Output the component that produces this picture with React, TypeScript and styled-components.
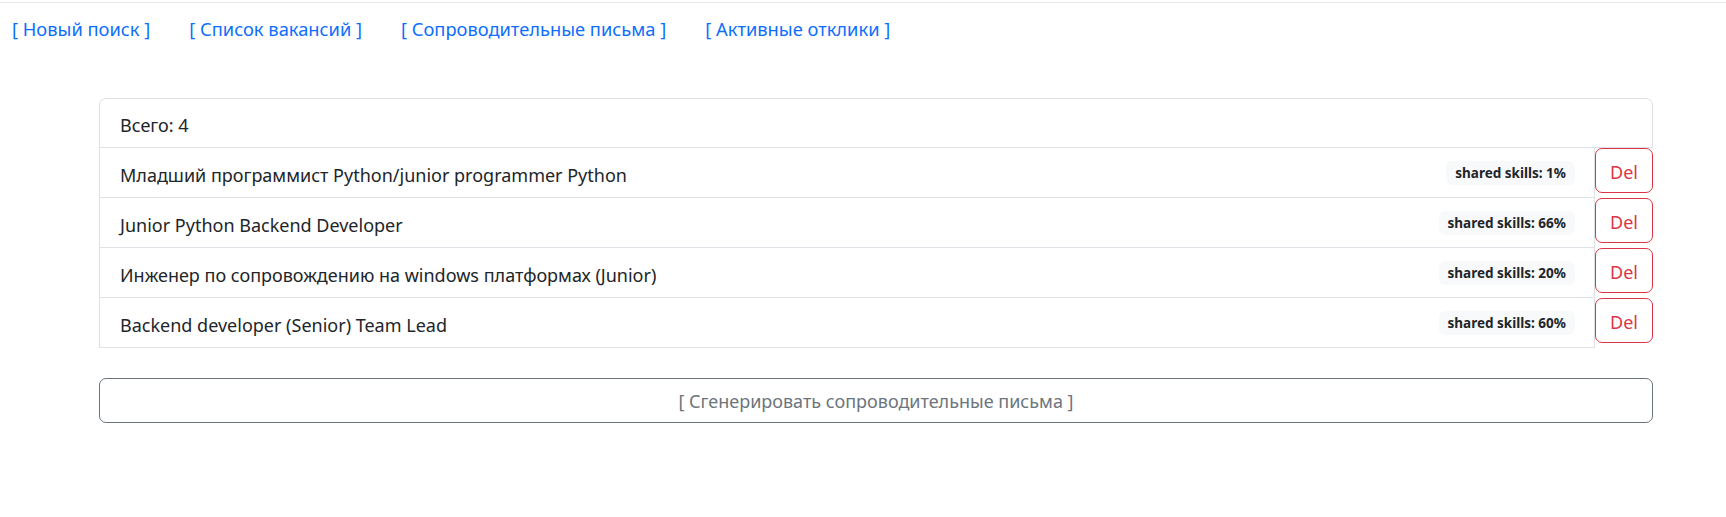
import React from "react";
import styled, { createGlobalStyle } from "styled-components";

const Global = createGlobalStyle`
  html, body { margin: 0; padding: 0; background: #fff; }
  body {
    font-family: "Noto Sans", "Open Sans", "Liberation Sans", sans-serif;
    font-size: 18px;
    color: #212529;
  }
`;

const TopRule = styled.div`
  height: 2px;
  border-bottom: 1px solid #e6e6e6;
`;

const Nav = styled.nav`
  display: flex;
  gap: 39px;
  padding: 11px 0 0 12px;
  height: 29px;
`;

const NavLink = styled.a`
  color: #0d6efd;
  text-decoration: none;
  font-size: 18.3px;
  line-height: 29px;
  white-space: nowrap;
  cursor: pointer;
`;

const Main = styled.main`
  margin: 55px 73px 0 99px;
  display: flex;
  flex-direction: column;
`;

const List = styled.div`
  display: flex;
  flex-direction: column;
`;

const Header = styled.div`
  height: 50px;
  box-sizing: border-box;
  border: 1px solid #dee2e6;
  border-radius: 7px 7px 0 0;
  padding: 4px 20px 0;
  display: flex;
  align-items: center;
`;

const Row = styled.div`
  display: flex;
  align-items: flex-start;
  height: 50px;
`;

const Item = styled.div`
  flex: 1;
  height: 50px;
  box-sizing: border-box;
  border: 1px solid #dee2e6;
  border-top: none;
  display: flex;
  align-items: center;
  justify-content: space-between;
  padding: 0 19px 0 20px;
`;

const Title = styled.span`
  padding-top: 4px;
`;

const Badge = styled.span`
  background: #f8f9fa;
  color: #212529;
  font-weight: 700;
  font-size: 13.5px;
  height: 24px;
  line-height: 24px;
  padding: 0 9px;
  border-radius: 6px;
  white-space: nowrap;
`;

const DelButton = styled.button`
  width: 58px;
  height: 45px;
  box-sizing: border-box;
  border: 1px solid #dc3545;
  border-radius: 7px;
  background: #fff;
  color: #dc3545;
  font-family: inherit;
  font-size: 18px;
  padding: 2px 0 0;
  cursor: pointer;
`;

const GenerateButton = styled.button`
  margin-top: 30px;
  height: 45px;
  box-sizing: border-box;
  border: 1px solid #6c757d;
  border-radius: 7px;
  background: #fff;
  color: #6c757d;
  font-family: inherit;
  font-size: 18px;
  padding-top: 2px;
  cursor: pointer;
`;

const vacancies = [
  { title: "Младший программист Python/junior programmer Python", skills: 1 },
  { title: "Junior Python Backend Developer", skills: 66 },
  { title: "Инженер по сопровождению на windows платформах (Junior)", skills: 20 },
  { title: "Backend developer (Senior) Team Lead", skills: 60 },
];

export default function App() {
  return (
    <>
      <Global />
      <TopRule />
      <Nav>
        <NavLink>[ Новый поиск ]</NavLink>
        <NavLink>[ Список вакансий ]</NavLink>
        <NavLink>[ Сопроводительные письма ]</NavLink>
        <NavLink>[ Активные отклики ]</NavLink>
      </Nav>
      <Main>
        <List>
          <Header>Всего: {vacancies.length}</Header>
          {vacancies.map((v) => (
            <Row key={v.title}>
              <Item>
                <Title>{v.title}</Title>
                <Badge>shared skills: {v.skills}%</Badge>
              </Item>
              <DelButton>Del</DelButton>
            </Row>
          ))}
        </List>
        <GenerateButton>[ Сгенерировать сопроводительные письма ]</GenerateButton>
      </Main>
    </>
  );
}
